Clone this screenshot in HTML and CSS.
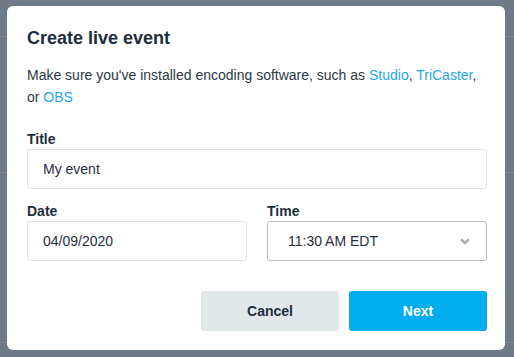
FILE: index.html
```html
<!DOCTYPE html>
<html lang="en">
<head>
    <meta charset="UTF-8">
    <meta name="viewport" content="width=device-width, initial-scale=1.0">
    <title>Create live event</title>
    <link rel="stylesheet" href="styles.css">
</head>
<body>
    <div class="backdrop">
        <div class="modal">
            <h1 class="modal-title">Create live event</h1>
            <p class="intro">Make sure you've installed encoding software, such as <a href="#">Studio</a>, <a href="#">TriCaster</a>, or <a href="#">OBS</a></p>

            <div class="field">
                <label class="label">Title</label>
                <div class="input">My event</div>
            </div>

            <div class="row">
                <div class="field">
                    <label class="label">Date</label>
                    <div class="input">04/09/2020</div>
                </div>
                <div class="field">
                    <label class="label">Time</label>
                    <div class="input select">
                        <span>11:30 AM EDT</span>
                        <svg class="chevron" width="10" height="7" viewBox="0 0 10 7">
                            <path d="M1 1.2 L5 5 L9 1.2" fill="none" stroke="#a3adb7" stroke-width="2.4"/>
                        </svg>
                    </div>
                </div>
            </div>

            <div class="actions">
                <button class="button cancel">Cancel</button>
                <button class="button next">Next</button>
            </div>
        </div>
    </div>
</body>
</html>
```

FILE: styles.css
```css
*{
    margin: 0;
    padding: 0;
    box-sizing: border-box;
}
html, body{
    height: 100%;
}
body{
    font-family: "Liberation Sans", Arial, sans-serif;
    color: #1f2d3d;
    background-color: #6f7a88;
    background-image:
        linear-gradient(#7a8591, #7a8591),
        linear-gradient(#7a8591, #7a8591),
        linear-gradient(#7a8591, #7a8591);
    background-size: 100% 1px;
    background-repeat: no-repeat;
    background-position: 0 36px, 0 172px, 0 342px;
    overflow: hidden;
}
.backdrop{
    padding: 6px 9px 0 7px;
}
.modal{
    width: 498px;
    height: 344px;
    background: white;
    border-radius: 6px;
    padding: 22px 18px 0 20px;
}
.modal-title{
    font-size: 18px;
    font-weight: bold;
    line-height: 20px;
    color: #1f2d3d;
}
.intro{
    margin-top: 16px;
    font-size: 14px;
    line-height: 22px;
    color: #2a3744;
}
.intro a{
    color: #1ea7ee;
    text-decoration: none;
}
.field{
    margin-top: 23px;
    display: flex;
    flex-direction: column;
    flex: 1;
}
.label{
    font-size: 14px;
    font-weight: bold;
    line-height: 16px;
    margin-bottom: 2px;
    color: #1f2d3d;
}
.input{
    height: 40px;
    border: 1px solid #dfe4e7;
    border-radius: 3px;
    padding: 0 15px;
    font-size: 14px;
    color: #1f2d3d;
    display: flex;
    align-items: center;
}
.select{
    border-color: #b5bfc8;
    justify-content: space-between;
    padding: 0 16px 0 20px;
}
.row{
    display: flex;
    gap: 20px;
}
.row .field{
    margin-top: 14px;
}
.actions{
    margin-top: 30px;
    display: flex;
    justify-content: flex-end;
    gap: 10px;
}
.button{
    width: 138px;
    height: 40px;
    border: none;
    border-radius: 3px;
    font-family: "Liberation Sans", Arial, sans-serif;
    font-size: 14px;
    font-weight: bold;
}
.cancel{
    background: #e2e8e9;
    color: #1f2d3d;
}
.next{
    background: #00aeef;
    color: white;
}
```
